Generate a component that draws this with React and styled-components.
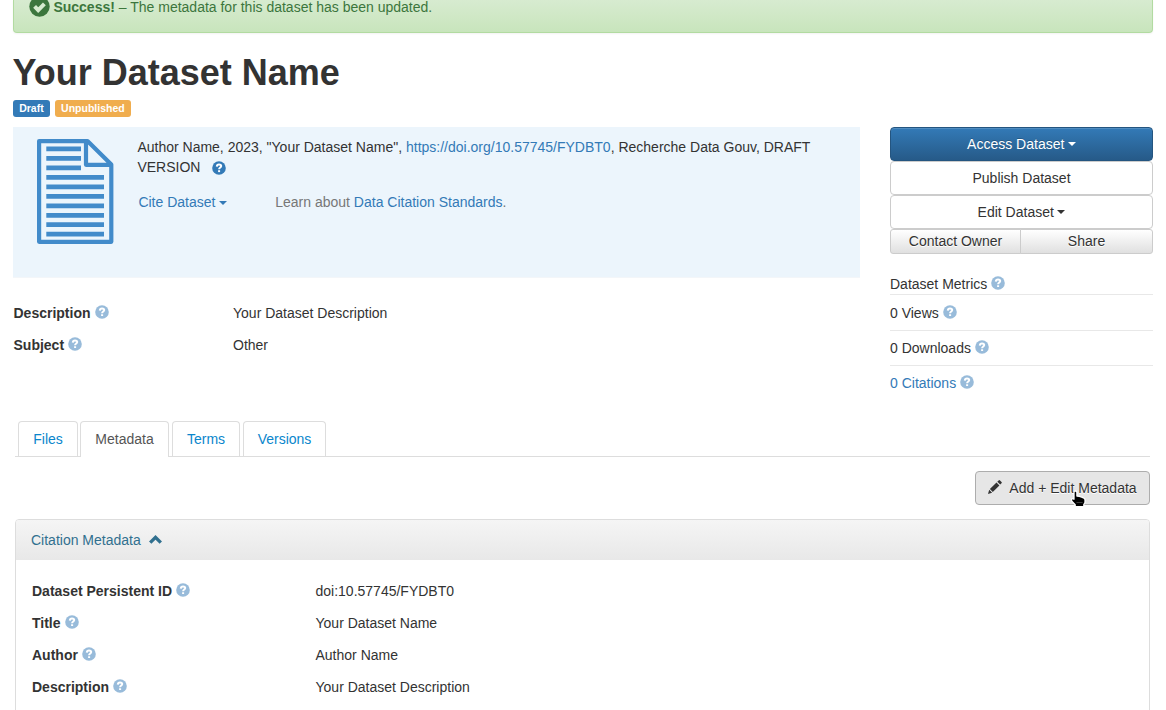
import React from "react";
import styled, { createGlobalStyle, css } from "styled-components";

const Global = createGlobalStyle`
  *, *::before, *::after { box-sizing: border-box; }
  body {
    margin: 0;
    background: #fff;
    color: #333;
    font: 14px/20px "Liberation Sans", Arial, sans-serif;
    overflow: hidden;
  }
`;

const Page = styled.div`
  height: 710px;
  padding: 0 13px;
  overflow: hidden;
`;

const Alert = styled.div`
  display: flex;
  align-items: flex-start;
  height: 33px;
  padding: 0 0 0 15px;
  border: 1px solid #b2dba1;
  border-top: 0;
  border-radius: 0 0 4px 4px;
  background: linear-gradient(#d7ebd0, #c8e5bc);
  box-shadow: 0 1px 2px rgba(0, 0, 0, 0.05);
  color: #3c763d;
  line-height: 14px;
  svg { margin: -4px 3.8px 0 -0.4px; flex: none; }
  p { margin: 0; white-space: pre; }
`;

const Title = styled.h1`
  margin: 20px 0 0 -0.6px;
  font-size: 36px;
  line-height: 40px;
  font-weight: 700;
`;

const Labels = styled.div`
  display: flex;
  gap: 5px;
  margin-top: 7px;
`;

const Label = styled.span`
  height: 17px;
  padding: 0 6.2px;
  border-radius: 3px;
  background: ${(p) => p.$color};
  color: #fff;
  font-size: 10.5px;
  line-height: 17px;
  font-weight: 700;
`;

const Columns = styled.div`
  display: flex;
  gap: 30px;
  height: 294px;
  margin-top: 10px;
`;

const Main = styled.main`
  width: 847px;
`;

const Side = styled.aside`
  width: 263px;
`;

const Citation = styled.section`
  display: flex;
  height: 151px;
  padding: 10px 0 0 24px;
  background: #ecf5fc;
  border-bottom: 1px solid #f3f6f9;
  > svg { flex: none; margin: 2px 23.4px 0 0; }
`;

const CitationText = styled.p`
  width: 690px;
  margin: 0;
`;

const CiteRow = styled.div`
  display: flex;
  gap: 48.3px;
  margin: 15px 0 0 1px;
  color: #777;
`;

const Link = styled.a`
  color: #337ab7;
`;

const Caret = styled.i`
  display: inline-block;
  margin-left: 3.5px;
  vertical-align: middle;
  border: 4px solid transparent;
  border-top-color: currentColor;
  border-bottom: 0;
`;

const Fields = styled.dl`
  display: grid;
  grid-template-columns: ${(p) => p.$label}px 1fr;
  grid-auto-rows: 20px;
  row-gap: 12px;
  margin: 0;
  padding: ${(p) => p.$pad};
  dt { font-weight: 700; }
  dd { margin: 0; }
`;

const HelpSvg = styled.svg`
  width: 14px;
  height: 14px;
  margin-left: ${(p) => p.$gap ?? 4}px;
  vertical-align: ${(p) => (p.$strong ? -3 : -1)}px;
  opacity: ${(p) => (p.$strong ? 1 : 0.5)};
`;

const button = css`
  display: flex;
  align-items: center;
  justify-content: center;
  border: 1px solid #ccc;
  border-radius: 4px;
  background: #fff;
  color: #333;
`;

const ActionButton = styled.div`
  ${button}
  height: 34px;
  ${(p) =>
    p.$primary &&
    css`
      border-color: #245580;
      background: linear-gradient(#337ab7, #265a88);
      color: #fff;
      text-shadow: 0 -1px 0 rgba(0, 0, 0, 0.2);
      box-shadow: inset 0 1px 0 rgba(255, 255, 255, 0.15);
    `}
`;

const ButtonPair = styled.div`
  display: flex;
`;

const SmallButton = styled.div`
  ${button}
  width: ${(p) => p.$width}px;
  height: 25px;
  background: linear-gradient(#fff, #e0e0e0);
  text-shadow: 0 1px 0 #fff;
  line-height: 20px;
  padding-bottom: 1px;
  &:first-child { border-radius: 3px 0 0 3px; }
  &:last-child { border-radius: 0 3px 3px 0; margin-left: -1px; }
`;

const Metrics = styled.div`
  margin-top: 20px;
`;

const Metric = styled.div`
  height: ${(p) => p.$height}px;
  padding-top: ${(p) => p.$top}px;
  border-bottom: ${(p) => (p.$last ? 0 : "1px solid #e8e8e8")};
`;

const Tabs = styled.nav`
  display: flex;
  gap: 3px;
  height: 36px;
  margin: 0 3px 0 2px;
  padding-left: 3px;
  border-bottom: 1px solid #ddd;
`;

const Tab = styled.div`
  width: ${(p) => p.$width}px;
  height: ${(p) => (p.$active ? 36 : 35)}px;
  margin-left: ${(p) => p.$shift ?? 0}px;
  border: 1px solid #ddd;
  border-bottom: 0;
  border-radius: 4px 4px 0 0;
  background: #fff;
  color: ${(p) => (p.$active ? "#555" : "#0a86cc")};
  line-height: 35px;
  text-align: center;
`;

const Toolbar = styled.div`
  display: flex;
  justify-content: flex-end;
  margin: 14px 3px 14px 0;
`;

const EditButton = styled.div`
  ${button}
  position: relative;
  width: 175px;
  height: 34px;
  border-color: #adadad;
  background: #e6e6e6;
  text-shadow: 0 1px 0 #fff;
  > svg:first-child { margin: -3px 7px 0 0; }
`;

const Pointer = styled.svg`
  position: absolute;
  left: 94px;
  top: 18px;
`;

const Panel = styled.section`
  height: 260px;
  margin: 0 3px 0 2px;
  border: 1px solid #ddd;
  border-radius: 4px;
`;

const PanelHead = styled.header`
  display: flex;
  align-items: center;
  gap: 8px;
  height: 40px;
  padding: 0 15px;
  border-radius: 3px 3px 0 0;
  background: linear-gradient(#f5f5f5, #e8e8e8);
  color: #31708f;
  svg { margin-top: -2px; }
`;

const Help = ({ strong, gap }) => (
  <HelpSvg viewBox="0 0 14 14" $strong={strong} $gap={gap}>
    <circle cx="7" cy="7" r="6.8" fill="#337ab7" />
    <path d="M4.8 5.6C4.9 4.1 5.7 3.5 7 3.5c1.3 0 2.2.6 2.2 1.6 0 1.5-2.1 1.4-2.1 3.1" fill="none" stroke="#fff" strokeWidth="2" />
    <path d="M6.1 9.2h2v1.900h-2z" fill="#fff" />
  </HelpSvg>
);

const CheckIcon = () => (
  <svg width="21" height="21" viewBox="0 0 21 21">
    <circle cx="10.5" cy="10.5" r="10.2" fill="#3c763d" />
    <path d="M5.6 10.400l3.600 3.700 6.200-6.200" fill="none" stroke="#d6ebcf" strokeWidth="4" />
  </svg>
);

const FileIcon = () => (
  <svg width="77" height="106" viewBox="0 0 77 106" fill="none" stroke="#428bca">
    <path d="M2.1 2.1H50.5L74.300 25.5V102.800H2.100zM49 2V25.800H74.500" strokeWidth="4.200" strokeLinejoin="round" />
    <path d="M9.300 9.800H44M9.300 19.300H44M9.300 28.800H44M9.300 38.300H67M9.300 47.800H67M9.300 57.300H67M9.300 66.800H67M9.300 76.300H67M9.300 85.700H67M9.300 95.200H67" strokeWidth="4.800" />
  </svg>
);

const PencilIcon = () => (
  <svg width="14" height="14" viewBox="0 0 14 14" fill="#333">
    <path d="M0 14l1.200-4.200 2.900 2.900zM1.900 9.100l6.600-6.600 2.900 2.900-6.600 6.600zM9.300 1.700L10.600.4q.7-.7 1.400 0l1.500 1.500q.7.7 0 1.400l-1.300 1.300z" />
  </svg>
);

const ChevronUp = () => (
  <svg width="13" height="9" viewBox="0 0 13 9">
    <path d="M1.200 7.600l5.300-5.200 5.300 5.200" fill="none" stroke="#31708f" strokeWidth="3.400" />
  </svg>
);

const Hand = () => (
  <Pointer width="17" height="18" viewBox="0 0 17 18">
    <path
      d="M4 2.400Q4 1 5.400 1T6.900 2.400V6L9.400 6.300 11.700 7.100 14 8.200Q15 8.600 15 10V12.500L13.800 14.500V16.600H5.200V14.700L1.600 11V9.200Q2.400 8.200 4 9.200z"
      fill="#000"
      stroke="#fff"
      strokeWidth="1.300"
      strokeLinejoin="round"
    />
    <path d="M6.500 12l1 1 1-1 1 1 1-1 1 1 1-1" fill="none" stroke="#777" strokeWidth=".6" />
  </Pointer>
);

const citationFields = [
  ["Dataset Persistent ID", "doi:10.57745/FYDBT0"],
  ["Title", "Your Dataset Name"],
  ["Author", "Author Name"],
  ["Description", "Your Dataset Description"],
];

const summaryFields = [
  ["Description", "Your Dataset Description"],
  ["Subject", "Other"],
];

const FieldList = ({ items, label, pad }) => (
  <Fields $label={label} $pad={pad}>
    {items.map(([name, value]) => (
      <React.Fragment key={name}>
        <dt>{name}<Help /></dt>
        <dd>{value}</dd>
      </React.Fragment>
    ))}
  </Fields>
);

export default function App() {
  return (
    <Page>
      <Global />
      <Alert>
        <CheckIcon />
        <p><b>Success!</b> – The metadata for this dataset has been updated.</p>
      </Alert>
      <Title>Your Dataset Name</Title>
      <Labels>
        <Label $color="#337ab7">Draft</Label>
        <Label $color="#f0ad4e">Unpublished</Label>
      </Labels>
      <Columns>
        <Main>
          <Citation>
            <FileIcon />
            <div>
              <CitationText>
                Author Name, 2023, "Your Dataset Name", <Link>https://doi.org/10.57745/FYDBT0</Link>, Recherche Data Gouv, DRAFT VERSION
                <Help strong gap={11.5} />
              </CitationText>
              <CiteRow>
                <Link>Cite Dataset<Caret /></Link>
                <span>Learn about <Link>Data Citation Standards</Link>.</span>
              </CiteRow>
            </div>
          </Citation>
          <FieldList items={summaryFields} label={219.5} pad="25px 0 0 0.5px" />
        </Main>
        <Side>
          <ActionButton $primary>Access Dataset<Caret /></ActionButton>
          <ActionButton>Publish Dataset</ActionButton>
          <ActionButton>Edit Dataset<Caret /></ActionButton>
          <ButtonPair>
            <SmallButton $width={131}>Contact Owner</SmallButton>
            <SmallButton $width={133}>Share</SmallButton>
          </ButtonPair>
          <Metrics>
            <Metric $height={21} $top={0}>Dataset Metrics<Help /></Metric>
            <Metric $height={36} $top={8}>0 Views<Help /></Metric>
            <Metric $height={35} $top={7}>0 Downloads<Help /></Metric>
            <Metric $height={35} $top={7} $last><Link>0 Citations</Link><Help /></Metric>
          </Metrics>
        </Side>
      </Columns>
      <Tabs>
        <Tab $width={60}>Files</Tab>
        <Tab $width={89} $active $shift={-1}>Metadata</Tab>
        <Tab $width={68}>Terms</Tab>
        <Tab $width={83}>Versions</Tab>
      </Tabs>
      <Toolbar>
        <EditButton>
          <PencilIcon />
          Add + Edit Metadata
          <Hand />
        </EditButton>
      </Toolbar>
      <Panel>
        <PanelHead>Citation Metadata<ChevronUp /></PanelHead>
        <FieldList items={citationFields} label={283.5} pad="21px 0 0 16px" />
      </Panel>
    </Page>
  );
}
